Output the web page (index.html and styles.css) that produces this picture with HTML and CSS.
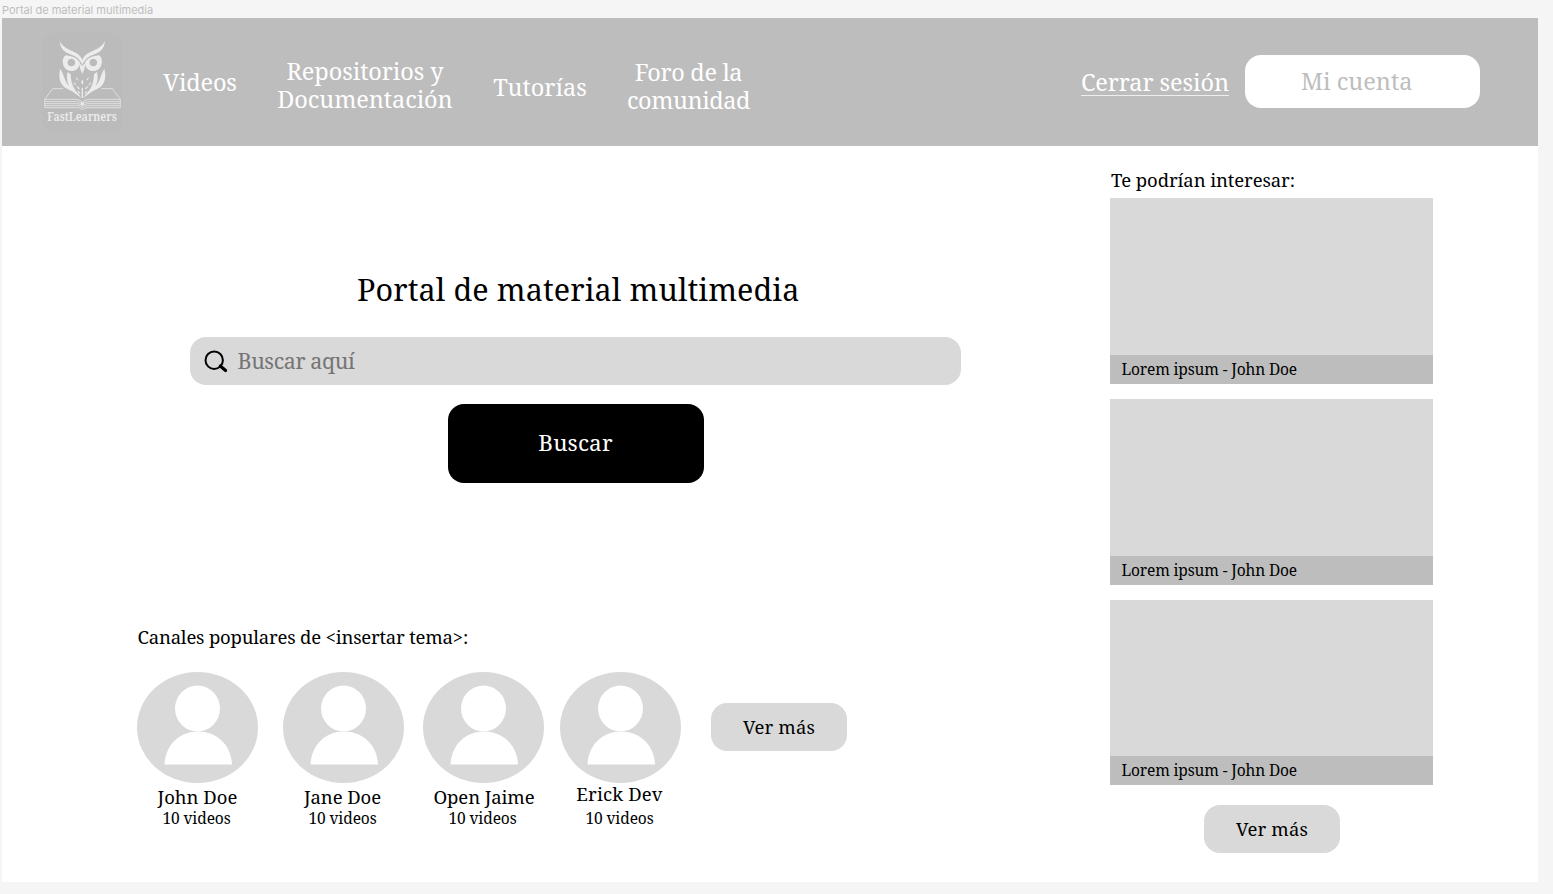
FILE: index.html
```html
<!DOCTYPE html>
<html lang="es">
<head>
<meta charset="utf-8">
<title>Portal de material multimedia</title>
<link rel="stylesheet" href="styles.css">
</head>
<body>
<svg class="defs" width="0" height="0" aria-hidden="true">
  <symbol id="avatar" viewBox="0 0 121 111">
    <ellipse cx="60.5" cy="55.5" rx="60.5" ry="55.5" fill="#d9d9d9"/>
    <ellipse cx="60.5" cy="36.5" rx="22.5" ry="23" fill="#fff"/>
    <path d="M27.5 92.5C28.5 72 43 59.5 61 59.5S94 72 95 92.5Z" fill="#fff"/>
  </symbol>
</svg>
<div class="frame-label">Portal de material multimedia</div>
<div class="board">
  <header class="header">
    <svg class="logo" viewBox="36 24 243 300" role="img" aria-label="FastLearners">
      <path d="M60 24H256L270 38L279 46V302L256 324H60L46 310L36 302V46L48 38Z" fill="#bbb"/>
      <g fill="#ececec">
        <path d="M89 48C96 63 110 71 128 79C144 86 153 94 157 106C161 94 170 86 186 79C204 71 218 63 225 48C223 72 210 82 190 89C173 95 162 105 157 120C152 105 141 95 124 89C104 82 91 72 89 48Z"/>
        <path fill-rule="evenodd" d="M107 91C96 99 97 114 101 123C106 134 114 138 124 138C139 138 148 128 150 113C143 101 131 94 107 91ZM124 101A11.500 11.500 0 1 1 123.900 101Z"/>
        <path fill-rule="evenodd" d="M207 91C218 99 217 114 213 123C208 134 200 138 190 138C175 138 166 128 164 113C171 101 183 94 207 91ZM190 101A11.500 11.500 0 1 1 189.900 101Z"/>
        <path d="M148 117Q154 117 157 123Q160 117 166 117Q165 132 157 147Q149 132 148 117Z"/>
        <path d="M91 131C83 161 92 183 113 192C127 198 141 206 153 218C142 200 125 190 115 180C104 168 102 149 91 131Z"/>
        <path d="M223 131C231 161 222 183 201 192C187 198 173 206 161 218C172 200 189 190 199 180C210 168 212 149 223 131Z"/>
        <path d="M113 141C105 173 121 201 155 218C134 199 122 177 122 148Z"/>
        <path d="M201 141C209 173 193 201 159 218C180 199 192 177 192 148Z"/>
        <path d="M137 157q8 2 8 10q-7-2-8-10ZM177 157q-8 2-8 10q7-2 8-10ZM157 164q6 7 0 15q-6-8 0-15ZM130 172q8 2 9 10q-8-2-9-10ZM184 172q-8 2-9 10q8-2 9-10ZM140 183q8 2 10 10q-9-1-10-10ZM174 183q-8 2-10 10q9-1 10-10ZM142 197q8 2 9 9q-8-1-9-9ZM172 197q-8 2-9 9q8-1 9-9ZM155 188h4v31h-4Z"/>
      </g>
      <g fill="none" stroke="#e4e4e4" stroke-width="2.600">
        <path d="M100 191H68L44 223V248H143Q150 248 153 252H161Q164 248 171 248H271V223L247 191H214"/>
        <path d="M44 223H138Q153 223 157 233Q161 223 176 223H271M44 230H140Q153 230 157 238Q161 230 174 230H271M44 236H142Q153 236 157 244Q161 236 172 236H271M44 242H142Q152 242 157 248Q162 242 172 242H271"/>
      </g>
      <circle cx="157" cy="236" r="5" fill="#ececec"/>
      <text class="logo-name" x="52" y="287" textLength="208" lengthAdjust="spacingAndGlyphs">FastLearners</text>
    </svg>
    <nav class="nav">
      <a class="nav-videos">Videos</a>
      <a class="nav-repos">Repositorios y<br>Documentación</a>
      <a class="nav-tutor">Tutorías</a>
      <a class="nav-forum"><span class="forum-top">Foro de la</span><br>comunidad</a>
    </nav>
    <a class="logout">Cerrar sesión</a>
    <button class="account">Mi cuenta</button>
  </header>
  <div class="content">
    <main class="main">
      <h1 class="title">Portal de material multimedia</h1>
      <div class="search">
        <svg class="search-icon" viewBox="0 0 24 24"><circle cx="10.200" cy="10.200" r="8.700" fill="none" stroke="#000" stroke-width="2"/><path d="M16.300 16L21.600 20.500" stroke="#000" stroke-width="3.200" stroke-linecap="round"/></svg>
        <span class="placeholder">Buscar aquí</span>
      </div>
      <button class="submit">Buscar</button>
      <h2 class="channels-title">Canales populares de &lt;insertar tema&gt;:</h2>
      <div class="channels">
        <div class="channel john"><svg class="avatar"><use href="#avatar"/></svg><div class="name">John Doe</div><div class="count">10 videos</div></div>
        <div class="channel jane"><svg class="avatar"><use href="#avatar"/></svg><div class="name">Jane Doe</div><div class="count">10 videos</div></div>
        <div class="channel jaime"><svg class="avatar"><use href="#avatar"/></svg><div class="name">Open Jaime</div><div class="count">10 videos</div></div>
        <div class="channel erick"><svg class="avatar"><use href="#avatar"/></svg><div class="name">Erick Dev</div><div class="count">10 videos</div></div>
        <button class="more channels-more">Ver más</button>
      </div>
    </main>
    <aside class="aside">
      <h2 class="aside-title">Te podrían interesar:</h2>
      <div class="videos">
        <div class="video"><div class="caption">Lorem ipsum - John Doe</div></div>
        <div class="video"><div class="caption">Lorem ipsum - John Doe</div></div>
        <div class="video"><div class="caption">Lorem ipsum - John Doe</div></div>
      </div>
      <button class="more aside-more">Ver más</button>
    </aside>
  </div>
</div>
</body>
</html>
```

FILE: styles.css
```css
* { box-sizing: border-box; }
body {
  margin: 0;
  height: 894px;
  overflow: hidden;
  background: #f5f5f5;
  color: #000;
  font-family: "Noto Serif", "DejaVu Serif Condensed", serif;
}
h1, h2 { margin: 0; font-weight: 400; white-space: nowrap; }
button { border: 0; padding: 0; font-family: inherit; font-weight: 400; }
.defs { display: block; }
.frame-label {
  height: 18px;
  padding: 3px 0 0 2px;
  font: 11px/14px Inter, sans-serif;
  color: #bdbdbd;
  white-space: nowrap;
}
.board { width: 1536px; height: 864px; margin-left: 2px; background: #fff; }
.header {
  display: flex;
  align-items: center;
  height: 128px;
  padding: 0 58px 0 40px;
  background: #bdbdbd;
  color: #fff;
  font-size: 23.5px;
  line-height: 28px;
}
.logo { width: 81px; height: 100px; margin-top: 2px; flex: none; overflow: visible; }
.logo-name { font-family: "Noto Serif", "DejaVu Serif Condensed", serif; font-size: 37px; font-weight: 600; fill: #ececec; }
.nav { display: flex; align-items: center; gap: 40px; margin-left: 40px; text-align: center; white-space: nowrap; }
.nav-videos { width: 74px; letter-spacing: -0.15px; }
.nav-repos { width: 176px; padding-top: 6px; letter-spacing: -0.08px; }
.nav-tutor { width: 94px; padding-top: 10px; }
.nav-forum { width: 123px; padding-top: 7px; letter-spacing: -0.44px; }
.forum-top { letter-spacing: -0.34px; }
.logout { width: 148px; height: 28px; margin-left: auto; letter-spacing: -0.08px; line-height: 29px; border-bottom: 1px solid #eee; white-space: nowrap; }
.account {
  width: 235.5px;
  height: 53px;
  margin: 0 0 2px 15.5px;
  padding-right: 11px;
  border-radius: 16px;
  background: #fff;
  color: #bdbdbd;
  font-size: 23.5px;
}
.content { display: flex; height: 736px; }
.main { width: 1108px; padding-left: 135.5px; }
.title { width: 442px; margin: 122px 0 0 219.5px; font-size: 30.5px; line-height: 42px; letter-spacing: 0.11px; }
.search {
  display: flex;
  align-items: center;
  width: 771px;
  height: 48px;
  margin: 27px 0 0 52.500px;
  padding-left: 14px;
  border-radius: 16px;
  background: #d9d9d9;
}
.search-icon { width: 24px; height: 24px; margin-top: 1px; }
.placeholder { margin: -2px 0 0 9.500px; font-size: 21.500px; letter-spacing: -0.42px; color: #757575; }
.submit {
  display: block;
  width: 256px;
  height: 78.500px;
  margin: 19px 0 0 310px;
  padding-bottom: 1px;
  border-radius: 16px;
  background: #000;
  color: #fff;
  font-size: 22.500px;
  letter-spacing: 0.15px;
}
.channels-title { margin-top: 140px; font-size: 18.500px; line-height: 28px; letter-spacing: -0.19px; }
.channels { display: flex; margin: 21.500px 0 0 -0.5px; }
.channel { width: 121px; text-align: center; white-space: nowrap; }
.jane { margin-left: 25px; }
.jaime { margin-left: 19px; }
.erick { margin-left: 16px; }
.avatar { display: block; width: 121px; height: 111px; }
.name { font-size: 18.500px; line-height: 26px; padding-top: 1px; }
.jane .name, .jaime .name { letter-spacing: -0.1px; }
.jane .name { padding-right: 2px; }
.jaime .name { padding-left: 1px; }
.erick .name { padding: 0 2px 0 0; height: 27px; line-height: 22px; letter-spacing: 0.15px; }
.count { font-size: 15.500px; line-height: 16px; letter-spacing: -0.1px; padding-right: 2px; }
.more {
  display: block;
  width: 136px;
  height: 48px;
  border-radius: 16px;
  background: #d9d9d9;
  color: #000;
  font-size: 18.500px;
  letter-spacing: 0.14px;
}
.channels-more { margin: 31px 0 0 30px; padding-bottom: 2px; }
.aside { width: 322.500px; }
.aside-title { padding: 20px 0 0 1px; height: 52px; font-size: 18.500px; line-height: 28px; letter-spacing: -0.1px; }
.videos { display: grid; gap: 15px; }
.video { display: flex; align-items: flex-end; height: 185.800px; background: #d9d9d9; }
.caption { width: 100%; height: 29px; padding-left: 11.500px; background: #bdbdbd; font-size: 15.500px; line-height: 29px; letter-spacing: -0.14px; }
.aside-more { margin: 19.500px 0 0 94px; }
```
